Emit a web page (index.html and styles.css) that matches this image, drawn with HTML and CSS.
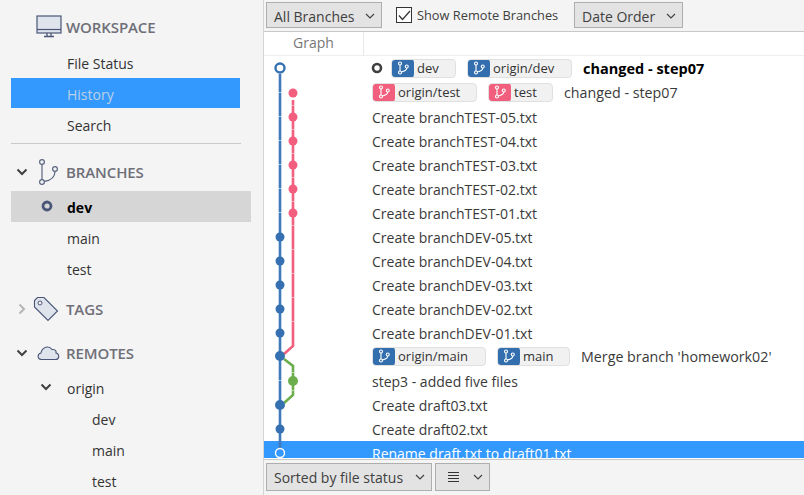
FILE: index.html
```html
<!DOCTYPE html>
<html lang="en">
<head>
<meta charset="utf-8">
<title>History</title>
<link rel="stylesheet" href="styles.css">
</head>
<body>
<svg class="defs" width="0" height="0"><defs>
<symbol id="br" viewBox="0 0 16 18"><g fill="none" stroke="#fff" stroke-width="1.500"><circle cx="4" cy="3" r="2"/><circle cx="4" cy="15" r="2"/><circle cx="13" cy="7" r="2"/><path d="M4 5v8M13 9c0 3-3 4.500-7.300 5.300"/></g></symbol>
</defs></svg>
<div class="app">
<aside class="sidebar">
  <div class="head head-ws">
    <svg class="ic-ws" width="26" height="24" viewBox="0 0 26 24"><rect x="1" y="1" width="24" height="17" fill="#dfe3ec" stroke="#4a5677" stroke-width="1.200"/><path d="M1 14.500h24" stroke="#4a5677" stroke-width="1.200"/><path d="M11 18v3M15 18v3M8 21.500h10" stroke="#4a5677" stroke-width="1.300"/></svg>
    <span>WORKSPACE</span>
  </div>
  <div class="item">File Status</div>
  <div class="item sel-blue">History</div>
  <div class="item item-after">Search</div>
  <div class="rule"></div>
  <div class="head head-br">
    <svg class="chev" width="12" height="8" viewBox="0 0 12 8"><path d="M1.500 1.500 6 6l4.500-4.500" fill="none" stroke="#404040" stroke-width="2"/></svg>
    <svg class="ic-br" width="22" height="26" viewBox="0 0 22 26"><g fill="none" stroke="#5a6580" stroke-width="1.200"><circle cx="5" cy="3" r="2.400"/><circle cx="5" cy="23" r="2.400"/><circle cx="18" cy="10" r="2.400"/><path d="M5 5.400v15.200M18 12.400c0 6-5 9-10.700 10"/></g></svg>
    <span>BRANCHES</span>
  </div>
  <div class="item sel-grey"><svg class="ring" width="12" height="12" viewBox="0 0 12 12"><circle cx="6" cy="6" r="4" fill="none" stroke="#4a5677" stroke-width="2.800"/></svg>dev</div>
  <div class="item">main</div>
  <div class="item">test</div>
  <div class="head head-tg">
    <svg class="chev-r" width="8" height="12" viewBox="0 0 8 12"><path d="M1.500 1.500 6 6l-4.500 4.500" fill="none" stroke="#b5b5b5" stroke-width="2"/></svg>
    <svg class="ic-tg" width="26" height="26" viewBox="0 0 26 26"><path d="M1.500 4.500 4.500 1.500H11L24.500 15 15 24.500 1.500 11Z" fill="#dfe3ec" stroke="#4a5677" stroke-width="1.100"/><circle cx="7" cy="7" r="2" fill="#f4f4f4" stroke="#4a5677"/></svg>
    <span>TAGS</span>
  </div>
  <div class="head head-rm">
    <svg class="chev" width="12" height="8" viewBox="0 0 12 8"><path d="M1.500 1.500 6 6l4.500-4.500" fill="none" stroke="#404040" stroke-width="2"/></svg>
    <svg class="ic-rm" width="23" height="16" viewBox="0 0 23 16"><path d="M5 14.500c-5 0-5-5.500-1-6.500C5 2 12 0 15 4.500c5-.5 4 3.500 4 3.500 4 1 3.500 6.500-.5 6.500Z" fill="#dfe3ec" stroke="#4a5677" stroke-width="1.100"/></svg>
    <span>REMOTES</span>
  </div>
  <div class="item item-origin"><svg class="chev-in" width="12" height="8" viewBox="0 0 12 8"><path d="M1.500 1.500 6 6l4.500-4.500" fill="none" stroke="#404040" stroke-width="2"/></svg>origin</div>
  <div class="item sub">dev</div>
  <div class="item sub">main</div>
  <div class="item sub">test</div>
</aside>
<main class="main">
  <div class="toolbar">
    <div class="btn btn-branches">All Branches<svg class="caret" width="10" height="6" viewBox="0 0 10 6"><path d="M1 1l4 4 4-4" fill="none" stroke="#444" stroke-width="1.200"/></svg></div>
    <label class="check"><span class="box"><svg width="13" height="11" viewBox="0 0 13 11"><path d="M1 5.500 4.500 9.500 12 1" fill="none" stroke="#333" stroke-width="1.200"/></svg></span>Show Remote Branches</label>
    <div class="btn btn-order">Date Order<svg class="caret" width="10" height="6" viewBox="0 0 10 6"><path d="M1 1l4 4 4-4" fill="none" stroke="#444" stroke-width="1.200"/></svg></div>
  </div>
  <div class="colhead"><div class="col-graph">Graph</div></div>
  <div class="list">
    <svg class="graph" width="60" height="402" viewBox="0 0 60 402">
      <g fill="none" stroke-width="2.600">
        <path d="M16 18V392" stroke="#4079ba"/>
        <path d="M29 44V290L20 298" stroke="#f25f7e"/>
        <path d="M20 303 29 310V339L20 347" stroke="#6cae4c"/>
      </g>
      <g stroke="#fff" stroke-opacity=".55" stroke-width="1" fill="none"><path d="M14.700 36.500h2.600M14.700 60.500h2.600M14.700 84.500h2.600M14.700 108.500h2.600M14.700 132.500h2.600M14.700 156.500h2.600M27.700 49.500h2.600M27.700 73.500h2.600M27.700 97.500h2.600M27.700 121.500h2.600M27.700 145.500h2.600M27.700 169.500h2.600M27.700 193.500h2.600M27.700 217.500h2.600M27.700 241.500h2.600M27.700 265.500h2.600M27.700 316.500h2.600M27.700 334.500h2.600M14.700 324.500h2.600"/></g>
      <g fill="#f25f7e"><circle cx="29" cy="37" r="4.500"/><circle cx="29" cy="61" r="4.500"/><circle cx="29" cy="85" r="4.500"/><circle cx="29" cy="109" r="4.500"/><circle cx="29" cy="133" r="4.500"/><circle cx="29" cy="157" r="4.500"/></g>
      <circle cx="29" cy="325" r="5" fill="#6cae4c"/>
      <g fill="#3570b0"><circle cx="16" cy="181" r="4.500"/><circle cx="16" cy="205" r="4.500"/><circle cx="16" cy="229" r="4.500"/><circle cx="16" cy="253" r="4.500"/><circle cx="16" cy="277" r="4.500"/><circle cx="16" cy="300" r="5"/><circle cx="16" cy="349" r="5"/><circle cx="16" cy="373" r="4.500"/></g>
      <circle cx="16" cy="12" r="4.500" fill="#fff" stroke="#3570b0" stroke-width="2.400"/>
      <circle cx="16" cy="397" r="4.500" fill="#3399ff" stroke="#fff" stroke-width="1.400"/>
    </svg>
    <div class="row row-tags">
      <svg class="head-ring" width="12" height="12" viewBox="0 0 12 12"><circle cx="6" cy="6" r="4" fill="none" stroke="#404040" stroke-width="2.600"/></svg>
      <span class="tag tag-blue t-dev"><span class="tag-ic"><svg width="12" height="14"><use href="#br"/></svg></span>dev</span>
      <span class="tag tag-blue t-odev"><span class="tag-ic"><svg width="12" height="14"><use href="#br"/></svg></span>origin/dev</span>
      <b class="msg-b">changed - step07</b>
    </div>
    <div class="row row-tags">
      <span class="tag tag-red t-otest"><span class="tag-ic"><svg width="12" height="14"><use href="#br"/></svg></span>origin/test</span>
      <span class="tag tag-red t-test"><span class="tag-ic"><svg width="12" height="14"><use href="#br"/></svg></span>test</span>
      <span class="msg">changed - step07</span>
    </div>
    <div class="row">Create branchTEST-05.txt</div>
    <div class="row">Create branchTEST-04.txt</div>
    <div class="row">Create branchTEST-03.txt</div>
    <div class="row">Create branchTEST-02.txt</div>
    <div class="row">Create branchTEST-01.txt</div>
    <div class="row">Create branchDEV-05.txt</div>
    <div class="row">Create branchDEV-04.txt</div>
    <div class="row">Create branchDEV-03.txt</div>
    <div class="row">Create branchDEV-02.txt</div>
    <div class="row">Create branchDEV-01.txt</div>
    <div class="row row-tags">
      <span class="tag tag-blue t-omain"><span class="tag-ic"><svg width="12" height="14"><use href="#br"/></svg></span>origin/main</span>
      <span class="tag tag-blue t-main"><span class="tag-ic"><svg width="12" height="14"><use href="#br"/></svg></span>main</span>
      <span class="msg">Merge branch 'homework02'</span>
    </div>
    <div class="row">step3 - added five files</div>
    <div class="row">Create draft03.txt</div>
    <div class="row">Create draft02.txt</div>
    <div class="row row-sel">Rename draft.txt to draft01.txt</div>
  </div>
  <div class="bottombar">
    <div class="btn btn-sort">Sorted by file status<svg class="caret" width="10" height="6" viewBox="0 0 10 6"><path d="M1 1l4 4 4-4" fill="none" stroke="#444" stroke-width="1.200"/></svg></div>
    <div class="btn btn-view"><svg width="13" height="12" viewBox="0 0 13 12"><path d="M1 1.500h11M1 4.500h11M1 7.500h11M1 10.500h11" stroke="#333" stroke-width="1.200"/></svg><svg class="caret" width="10" height="6" viewBox="0 0 10 6"><path d="M1 1l4 4 4-4" fill="none" stroke="#444" stroke-width="1.200"/></svg></div>
  </div>
</main>
</div>
</body>
</html>
```
FILE: styles.css
```css
* { box-sizing: border-box; }
html, body { margin: 0; height: 100%; overflow: hidden; }
body { font-family: "Open Sans", "Noto Sans", sans-serif; font-size: 14px; color: #333; background: #fff; }
.defs { position: absolute; }
.app { display: flex; width: 804px; height: 495px; }

.sidebar { width: 264px; flex: none; background: #f4f4f4; border-right: 1px solid #d4d4d4; padding: 9px 0 0 11px; overflow: hidden; }
.head { position: relative; display: flex; align-items: center; margin-left: -11px; padding-left: 11px; font-weight: 600; color: #6f6f78; font-size: 15px; letter-spacing: -0.1px; }
.head span { position: absolute; left: 66px; }
.head-ws { height: 36px; margin-bottom: 2px; }
.ic-ws { margin-left: 25px; }
.head-br { height: 29px; margin-top: 13px; margin-bottom: 5px; }
.head-tg { height: 29px; margin-top: 10px; }
.head-rm { height: 29px; margin-top: 15px; margin-bottom: 5px; }
.chev { margin-left: 5px; }
.chev-r { margin-left: 7px; }
.ic-br { margin-left: 9px; }
.ic-tg { margin-left: 7px; }
.ic-rm { margin-left: 9px; }

.item { height: 31px; display: flex; align-items: center; padding: 2px 0 0 56px; position: relative; white-space: nowrap; font-size: 14px; color: #333; }
.sel-blue { background: #3399ff; color: #bcd0e6; width: 229px; height: 30px; }
.item-after { height: 33px; }
.sel-grey { background: #d6d6d6; color: #000; font-weight: 700; width: 240px; }
.sub { padding-left: 81px; }
.ring { position: absolute; left: 30px; top: 9px; }
.chev-in { position: absolute; left: 29px; top: 11px; }
.rule { width: 230px; height: 1px; background: #c9c9c9; margin-top: 2px; }

.main { flex: 1; min-width: 0; display: flex; flex-direction: column; }
.toolbar { height: 32px; flex: none; display: flex; align-items: center; background: #f4f4f4; border-bottom: 1px solid #c8c8c8; padding: 0 0 1px 2px; }
.btn { height: 26px; display: flex; align-items: center; justify-content: space-between; background: #e3e3e3; border: 1px solid #aeaeae; padding: 0 6px 0 7px; white-space: nowrap; color: #404040; font-size: 14px; }
.btn-branches { width: 116px; padding-top: 2px; }
.check { display: flex; align-items: center; margin-left: 14px; font-size: 12.800px; color: #404040; width: 178px; white-space: nowrap; }
.box { width: 16px; height: 16px; border: 1px solid #333; background: #fff; display: flex; align-items: center; justify-content: center; margin-right: 5px; }
.btn-order { width: 109px; padding-top: 2px; }
.colhead { height: 24px; flex: none; background: #fff; border-bottom: 1px solid #eee; display: flex; }
.col-graph { width: 100px; border-right: 1px solid #e8e8e8; text-align: center; color: #777; font-size: 14px; line-height: 21px; }

.list { height: 402px; flex: none; position: relative; overflow: hidden; }
.graph { position: absolute; left: 0; top: 0; z-index: 2; }
.row { height: 24px; display: flex; align-items: center; padding: 2px 0 0 108px; white-space: nowrap; color: #3a3a3a; font-size: 14px; }
.row-tags { padding-top: 0; }
.row-sel { background: #3399ff; color: #fff; height: 17px; align-items: flex-start; padding-top: 0; line-height: 26px; margin-top: 1px; }
.head-ring { margin: 0 8px 0 -1px; }
.tag { height: 19px; display: flex; align-items: center; background: #f1f1f1; border: 1px solid #e0e0e0; border-radius: 4px; margin-right: 11px; font-size: 13px; color: #333; overflow: hidden; }
.tag-ic { width: 23px; height: 19px; flex: none; margin: 0 3px 0 -1px; border-radius: 4px; display: flex; align-items: center; justify-content: center; }
.tag-blue .tag-ic { background: #336faf; }
.tag-red .tag-ic { background: #f25f7e; }
.t-dev { width: 65px; }
.t-odev { width: 105px; }
.t-otest { width: 105px; }
.t-test { width: 65px; }
.t-omain { width: 114px; }
.t-main { width: 73px; }
.msg-b { color: #000; font-weight: 700; font-size: 14.500px; }
.msg { color: #3a3a3a; font-size: 14.250px; }

.bottombar { flex: 1; background: #f4f4f4; border-top: 1px solid #c8c8c8; display: flex; align-items: flex-start; padding: 3px 0 0 2px; gap: 3px; margin-top: 1px; }
.btn-sort { width: 166px; height: 28px; }
.btn-view { width: 55px; height: 28px; padding: 0 6px 0 11px; }
```
